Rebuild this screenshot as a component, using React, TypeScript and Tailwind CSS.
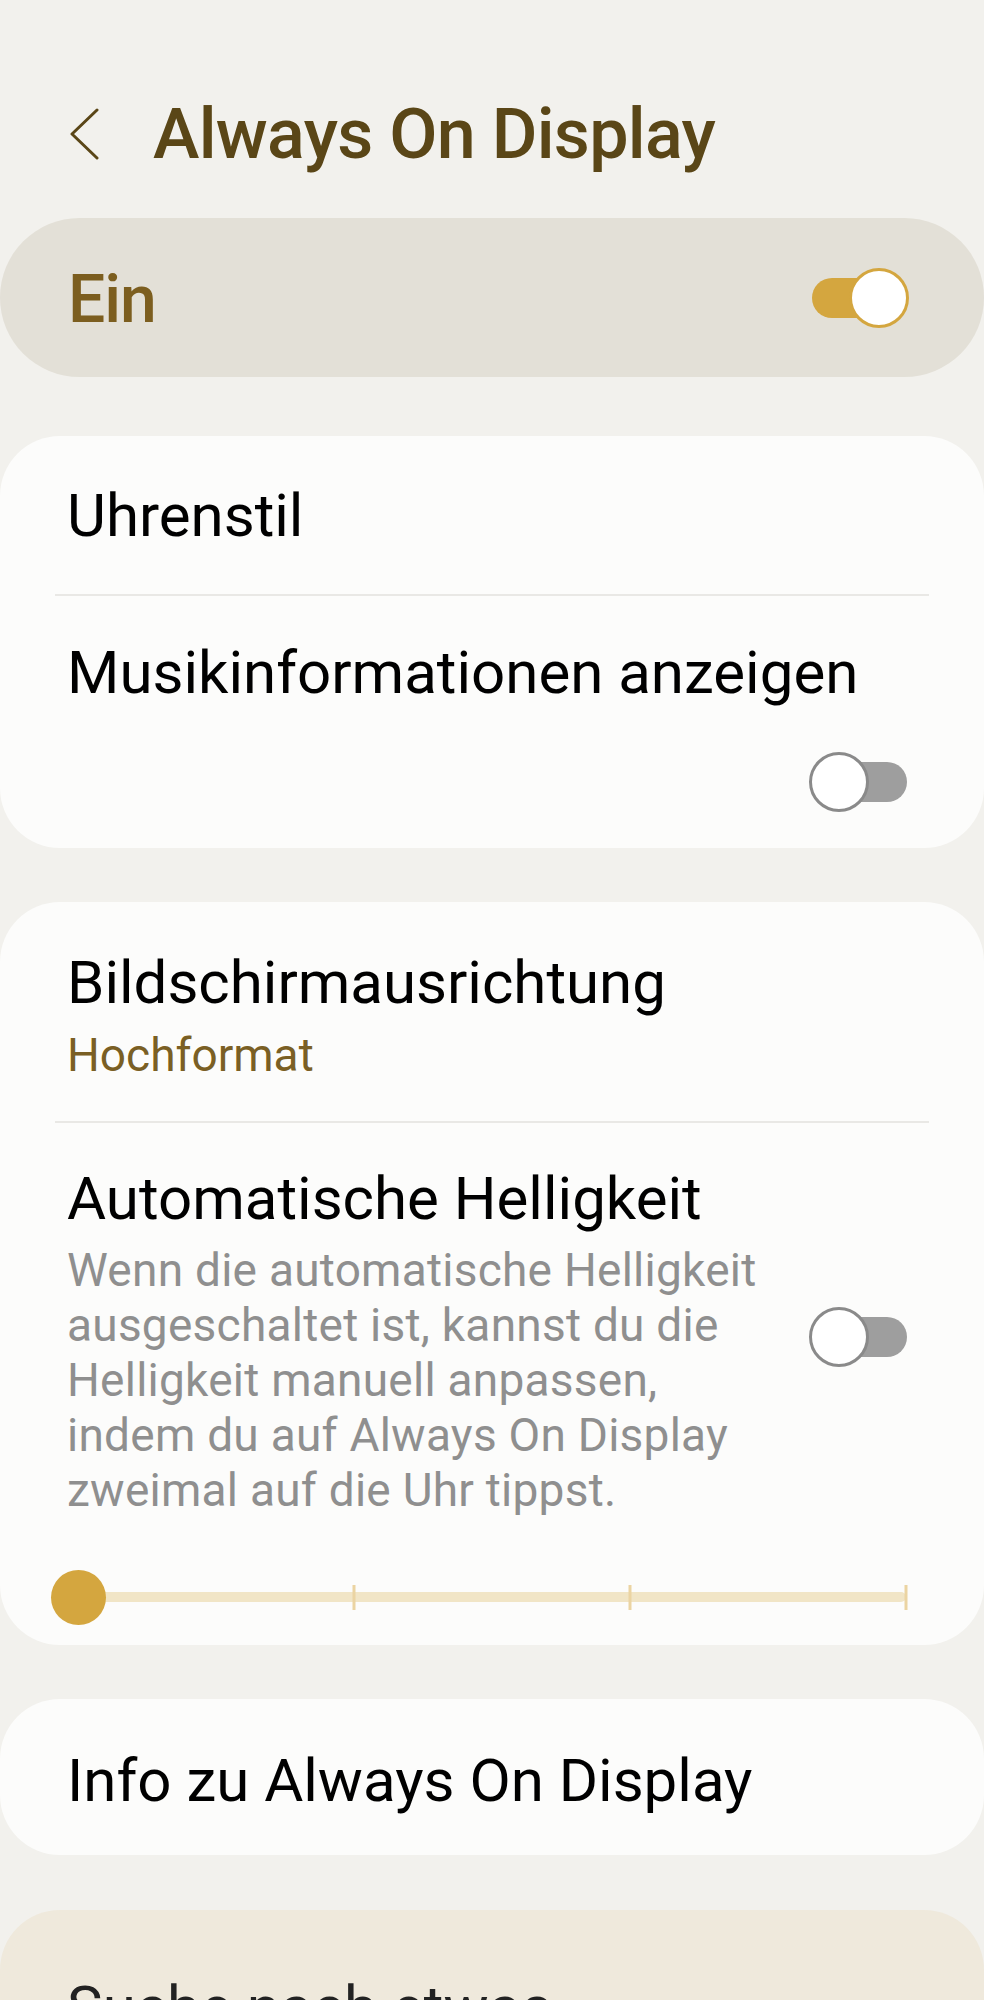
import React from "react";

function Toggle({ on, className = "" }: { on: boolean; className?: string }) {
  return (
    <div className={"relative h-[60px] w-[100px] shrink-0 " + className}>
      <div
        className={
          on
            ? "absolute left-[3px] right-[4px] top-[10px] h-[40px] rounded-full bg-[#d4a63f]"
            : "absolute left-[3px] right-[2px] top-[10px] h-[40px] rounded-full bg-[#9e9e9e]"
        }
      />
      <div
        className={
          on
            ? "absolute right-0 top-0 h-[60px] w-[60px] rounded-full border-[3px] border-[#d4a63f] bg-white"
            : "absolute left-0 top-0 h-[60px] w-[60px] rounded-full border-[3px] border-[#8a8a8a] bg-white"
        }
      />
    </div>
  );
}

function Slider() {
  const ticks = [33.33, 66.66, 100];
  return (
    <div className="relative ml-[51px] mr-[78px] h-[55px]">
      <div className="absolute left-[27px] right-0 top-[22px] h-[10px] rounded-full bg-[#f1e5c6]" />
      {ticks.map((t) => (
        <div
          key={t}
          className="absolute top-[15px] h-[25px] w-[3px] -translate-x-1/2 bg-[#ebd4a2]"
          style={{ left: `calc(27px + (100% - 27px) * ${t / 100})` }}
        />
      ))}
      <div className="absolute left-0 top-0 h-[55px] w-[55px] rounded-full bg-[#d4a63f]" />
    </div>
  );
}

export default function App() {
  return (
    <div className="h-[2000px] overflow-hidden bg-[#f2f1ed] font-['Roboto',sans-serif]">
      <header className="mt-[99px] flex h-[70px] items-center">
        <svg className="ml-[68px] mr-[53px]" width="32" height="52" viewBox="0 0 32 52" fill="none">
          <path d="M29 2 L4 26 L29 50" stroke="#5a4617" strokeWidth="3" strokeLinecap="round" strokeLinejoin="round" />
        </svg>
        <h1 className="text-[70px] font-medium leading-none tracking-[-0.7px] text-[#5a4617]">
          Always On Display
        </h1>
      </header>

      <div className="mt-[49px] flex h-[159px] items-center justify-between rounded-full bg-[#e3e0d7] pl-[68px] pr-[75px]">
        <span className="mt-[4px] text-[66px] font-medium leading-none tracking-[-1px] text-[#7c5e1f]">Ein</span>
        <Toggle on />
      </div>

      <section className="mt-[59px] rounded-[60px] bg-[#fcfcfb]">
        <div className="flex h-[158px] items-center px-[67px]">
          <span className="mt-[2px] text-[60px] leading-none text-black">Uhrenstil</span>
        </div>
        <div className="mx-[55px] h-[2px] bg-[#e9e8e5]" />
        <div className="px-[67px] pb-[36px] pt-[47px]">
          <div className="text-[60px] leading-none text-black">Musikinformationen anzeigen</div>
          <div className="mt-[49px] flex justify-end pr-[8px]">
            <Toggle on={false} />
          </div>
        </div>
      </section>

      <section className="mt-[54px] rounded-[60px] bg-[#fcfcfb] pb-[20px]">
        <div className="px-[67px] pb-[43px] pt-[51px]">
          <div className="text-[60px] leading-none text-black">Bildschirmausrichtung</div>
          <div className="mt-[19px] text-[46px] leading-none text-[#7a5f24]">Hochformat</div>
        </div>
        <div className="mx-[55px] h-[2px] bg-[#e9e8e5]" />
        <div className="flex items-center justify-between pl-[67px] pr-[75px] pt-[46px]">
          <div>
            <div className="text-[60px] leading-none text-black">Automatische Helligkeit</div>
            <p className="mt-[14px] whitespace-nowrap text-[46px] leading-[55px] tracking-[0.25px] text-[#8f8f8f]">
              Wenn die automatische Helligkeit
              <br />
              ausgeschaltet ist, kannst du die
              <br />
              Helligkeit manuell anpassen,
              <br />
              indem du auf Always On Display
              <br />
              zweimal auf die Uhr tippst.
            </p>
          </div>
          <Toggle on={false} className="mb-[14px]" />
        </div>
        <div className="mt-[52px]">
          <Slider />
        </div>
      </section>

      <section className="mt-[54px] flex h-[156px] items-center rounded-[60px] bg-[#fcfcfb] px-[67px]">
        <span className="mt-[8px] text-[60px] leading-none text-black">Info zu Always On Display</span>
      </section>

      <section className="mt-[55px] rounded-[60px] bg-[#efe9dc] px-[67px] pb-[60px] pt-[68px]">
        <span className="text-[60px] leading-none text-[#222]">Suche nach etwas</span>
      </section>
    </div>
  );
}
